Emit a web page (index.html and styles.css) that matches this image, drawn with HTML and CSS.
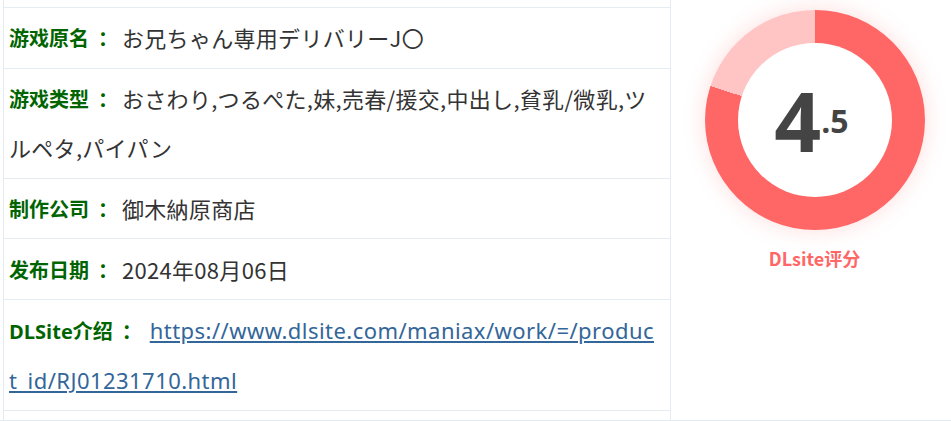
FILE: index.html
```html
<!DOCTYPE html>
<html lang="zh-CN">
<head>
<meta charset="utf-8">
<title>游戏信息</title>
<link rel="stylesheet" href="styles.css">
</head>
<body>
<div class="wrap">
  <div class="gutter"></div>
  <div class="info">
    <div class="row"><span class="label">游戏原名<span class="colon">：</span></span><span class="value">お兄ちゃん専用デリバリーJ〇</span></div>
    <div class="row"><span class="label">游戏类型<span class="colon">：</span></span><span class="value">おさわり,つるぺた,妹,売春/援交,中出し,貧乳/微乳,ツルペタ,パイパン</span></div>
    <div class="row"><span class="label">制作公司<span class="colon">：</span></span><span class="value">御木納原商店</span></div>
    <div class="row"><span class="label">发布日期<span class="colon">：</span></span><span class="value">2024年08月06日</span></div>
    <div class="row last"><span class="label"><span class="latin">DLSite</span>介绍<span class="colon">：</span></span><a class="value link" href="#">https://www.dlsite.com/maniax/work/=/product_id/RJ01231710.html</a></div>
  </div>
  <div class="score">
    <div class="donut">
      <div class="donut-inner"><span class="big">4</span><span class="small">.5</span></div>
    </div>
    <div class="score-label">DLsite评分</div>
  </div>
</div>
</body>
</html>
```
FILE: styles.css
```css
html, body {
  margin: 0;
  padding: 0;
  background: #fff;
}
body {
  font-family: "Noto Sans CJK SC", "Noto Sans", sans-serif;
  color: #333;
  width: 951px;
  height: 421px;
  overflow: hidden;
}
.wrap {
  display: flex;
  height: 420px;
  border-bottom: 1px solid #e3ebf3;
}
.gutter {
  width: 3px;
  flex: none;
}
.info {
  width: 666px;
  flex: none;
  border-left: 1px solid #e3ebf3;
  border-right: 1px solid #e3ebf3;
  padding-top: 7px;
  box-sizing: content-box;
}
.row {
  border-top: 1px solid #e3ebf3;
  padding: 5.4px 10px 5.4px 5px;
  font-family: "Noto Sans CJK JP", "Noto Sans", sans-serif;
  font-size: 22px;
  line-height: 49px;
  word-break: break-all;
}
.row.last {
  border-bottom: 1px solid #e3ebf3;
}
.label {
  vertical-align: top;
  font-family: "Noto Sans CJK SC", "Noto Sans", sans-serif;
  font-size: 20px;
  font-weight: bold;
  color: #006400;
}
.label .colon {
  display: inline-block;
  width: 20px;
  padding-left: 9px;
  box-sizing: border-box;
  overflow: visible;
  white-space: nowrap;
}
.label .latin {
  font-family: "Open Sans", "Noto Sans", sans-serif;
}
.value {
  vertical-align: top;
  font-size: 22px;
  color: #333;
  margin-left: 13px;
  letter-spacing: 0.3px;
}
.link {
  color: #336699;
  text-decoration: underline;
  font-family: "Noto Sans", "Noto Sans CJK JP", sans-serif;
  letter-spacing: 0.45px;
  margin-left: 17px;
}
.score {
  flex: 1;
  display: flex;
  flex-direction: column;
  align-items: center;
  padding-top: 10px;
  padding-left: 7px;
}
.donut {
  width: 220px;
  height: 220px;
  border-radius: 50%;
  background: conic-gradient(#ff6666 0 80%, #ffc5c5 80% 100%);
  box-shadow: 0 0 22px rgba(255, 102, 102, 0.22);
  display: flex;
  align-items: center;
  justify-content: center;
}
.donut-inner {
  width: 154px;
  height: 154px;
  border-radius: 50%;
  background: #fff;
  display: flex;
  align-items: center;
  justify-content: center;
  font-family: "Open Sans", "Noto Sans", sans-serif;
  font-weight: bold;
  color: #444;
}
.big {
  font-size: 82px;
  line-height: 1;
  margin-left: -6px;
}
.small {
  font-size: 32px;
  line-height: 1;
  margin-top: 2px;
}
.score-label {
  margin-top: 16px;
  font-size: 18px;
  font-weight: bold;
  color: #ff6666;
  line-height: 24px;
}
```
